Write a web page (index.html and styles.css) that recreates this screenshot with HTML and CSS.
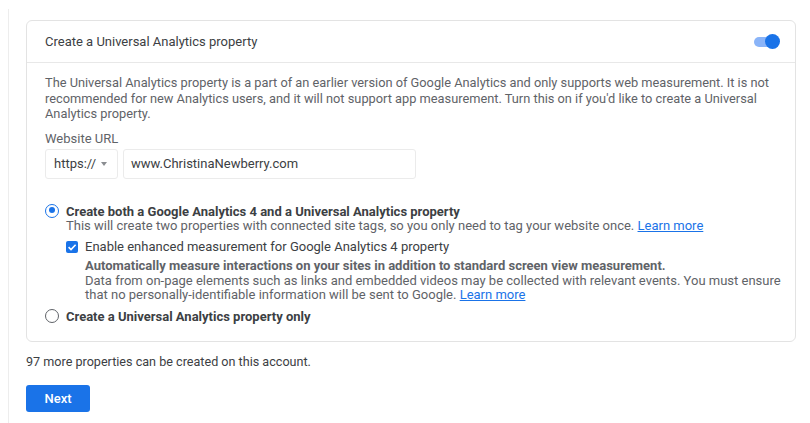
FILE: index.html
```html
<!DOCTYPE html>
<html>
<head>
<meta charset="utf-8">
<link rel="stylesheet" href="styles.css">
</head>
<body>
<div class="page">
  <div class="card">
    <div class="card-head">
      <span class="head-title">Create a Universal Analytics property</span>
      <span class="toggle"><span class="track"></span><span class="thumb"></span></span>
    </div>
    <div class="card-body">
      <p class="desc">The Universal Analytics property is a part of an earlier version of Google Analytics and only supports web measurement. It is not recommended for new Analytics users, and it will not support app measurement. Turn this on if you'd like to create a Universal Analytics property.</p>
      <div class="field-label">Website URL</div>
      <div class="url-row">
        <div class="select"><span>https://</span><span class="caret"></span></div>
        <div class="input">www.ChristinaNewberry.com</div>
      </div>
      <div class="option">
        <span class="radio checked"></span>
        <div class="opt-text">
          <div class="opt-title">Create both a Google Analytics 4 and a Universal Analytics property</div>
          <div class="opt-sub">This will create two properties with connected site tags, so you only need to tag your website once. <a href="#">Learn more</a></div>
          <div class="check-row">
            <span class="checkbox"><svg viewBox="0 0 12 12" width="12" height="12"><path d="M2.6 6.2 L5 8.5 L9.6 3.7" fill="none" stroke="#fff" stroke-width="1.6"/></svg></span>
            <div class="check-text">
              <div class="check-title">Enable enhanced measurement for Google Analytics 4 property</div>
              <div class="check-bold">Automatically measure interactions on your sites in addition to standard screen view measurement.</div>
              <div class="check-sub">Data from on-page elements such as links and embedded videos may be collected with relevant events. You must ensure that no personally-identifiable information will be sent to Google. <a href="#">Learn more</a></div>
            </div>
          </div>
        </div>
      </div>
      <div class="option option-2">
        <span class="radio"></span>
        <div class="opt-text">
          <div class="opt-title">Create a Universal Analytics property only</div>
        </div>
      </div>
    </div>
  </div>
  <div class="note">97 more properties can be created on this account.</div>
  <button class="next">Next</button>
</div>
</body>
</html>
```
FILE: styles.css
```css
html, body {
  margin: 0;
  padding: 0;
  background: #fff;
}
body {
  font-family: Roboto, "Liberation Sans", Arial, sans-serif;
  font-size: 13px;
  color: #5f6368;
}
.page {
  margin: 9px 0 0 8px;
  border-left: 1px solid #ededed;
  padding: 11px 14px 0 17px;
  height: 414px;
  box-sizing: border-box;
}
.card {
  border: 1px solid #e3e3e3;
  border-radius: 6px;
  box-sizing: border-box;
}
.card-head {
  display: flex;
  align-items: center;
  justify-content: space-between;
  height: 41px;
  padding: 0 15px 0 18px;
  border-bottom: 1px solid #e8e8e8;
}
.head-title {
  color: #3c4043;
  font-size: 13px;
}
.toggle {
  position: relative;
  width: 26px;
  height: 16px;
  display: inline-block;
}
.track {
  position: absolute;
  left: 0;
  top: 3px;
  width: 24px;
  height: 10px;
  border-radius: 5px;
  background: #8ab4f8;
}
.thumb {
  position: absolute;
  right: 0;
  top: 0;
  width: 15px;
  height: 15px;
  border-radius: 50%;
  background: #1a73e8;
}
.card-body {
  padding: 12px 10px 17px 18px;
}
.desc {
  margin: 0;
  line-height: 15.5px;
  font-size: 12.8px;
}
.field-label {
  margin-top: 9px;
  line-height: 16px;
}
.url-row {
  display: flex;
  gap: 5px;
  margin-top: 2px;
}
.select, .input {
  height: 30px;
  box-sizing: border-box;
  border: 1px solid #ebebeb;
  border-radius: 3px;
  display: flex;
  align-items: center;
  color: #3c4043;
}
.select {
  width: 73px;
  padding: 0 8px;
  justify-content: space-between;
}
.caret {
  width: 0;
  height: 0;
  border-left: 3.5px solid transparent;
  border-right: 3.5px solid transparent;
  border-top: 4px solid #8a8d91;
  margin-right: 2px;
}
.input {
  width: 293px;
  padding: 0 7px;
}
.option {
  display: flex;
  align-items: flex-start;
  margin-top: 25px;
}
.option-2 {
  margin-top: 6px;
}
.radio {
  width: 14px;
  height: 14px;
  box-sizing: border-box;
  border: 1.5px solid #5f6368;
  border-radius: 50%;
  margin-top: 0px;
  flex: none;
  position: relative;
}
.radio.checked {
  border-color: #1a73e8;
}
.radio.checked::after {
  content: "";
  position: absolute;
  left: 2.5px;
  top: 2.5px;
  width: 6px;
  height: 6px;
  border-radius: 50%;
  background: #1a73e8;
}
.opt-text {
  margin-left: 7px;
}
.opt-title {
  font-weight: 700;
  color: #3c4043;
  line-height: 15px;
  font-size: 13px;
}
.opt-sub {
  line-height: 14px;
}
a {
  color: #1a73e8;
  text-decoration: underline;
}
.check-row {
  display: flex;
  align-items: flex-start;
  margin-top: 6px;
}
.checkbox {
  width: 12px;
  height: 12px;
  background: #1a73e8;
  border-radius: 2px;
  flex: none;
  margin-top: 2px;
  display: flex;
}
.check-text {
  margin-left: 7px;
}
.check-title {
  color: #3c4043;
  line-height: 16px;
}
.check-bold {
  font-weight: 700;
  font-size: 13px;
  line-height: 16px;
  margin-top: 3px;
}
.check-sub {
  line-height: 14.5px;
  font-size: 13px;
}
.note {
  margin-top: 12px;
  color: #3c4043;
  line-height: 16px;
  font-size: 12.6px;
}
.next {
  margin-top: 15px;
  width: 64px;
  height: 27px;
  border: none;
  border-radius: 3px;
  background: #1a73e8;
  color: #fff;
  font-family: Roboto, "Liberation Sans", Arial, sans-serif;
  font-weight: 500;
  font-size: 13px;
  padding: 0;
}
```
